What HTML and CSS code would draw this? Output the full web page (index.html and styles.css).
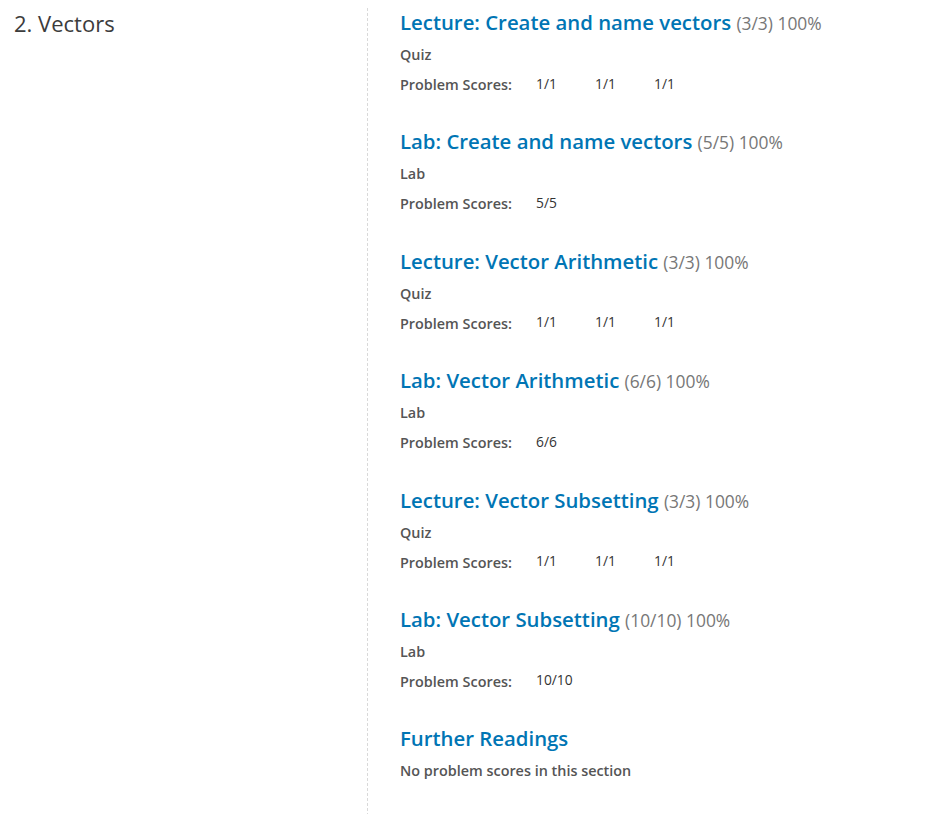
FILE: index.html
```html
<!DOCTYPE html>
<html>
<head>
<meta charset="utf-8">
<link rel="stylesheet" href="styles.css">
</head>
<body>
<div class="chapter">
  <h2 class="chapter-title">2. Vectors</h2>
  <div class="sections">
    <div class="section">
      <h3 class="section-title"><a href="#">Lecture: Create and name vectors</a> <span class="score">(3/3) 100%</span></h3>
      <p class="format">Quiz</p>
      <div class="scores"><span class="label">Problem Scores:</span><ol><li>1/1</li><li>1/1</li><li>1/1</li></ol></div>
    </div>
    <div class="section">
      <h3 class="section-title"><a href="#">Lab: Create and name vectors</a> <span class="score">(5/5) 100%</span></h3>
      <p class="format">Lab</p>
      <div class="scores"><span class="label">Problem Scores:</span><ol><li>5/5</li></ol></div>
    </div>
    <div class="section">
      <h3 class="section-title"><a href="#">Lecture: Vector Arithmetic</a> <span class="score">(3/3) 100%</span></h3>
      <p class="format">Quiz</p>
      <div class="scores"><span class="label">Problem Scores:</span><ol><li>1/1</li><li>1/1</li><li>1/1</li></ol></div>
    </div>
    <div class="section">
      <h3 class="section-title"><a href="#">Lab: Vector Arithmetic</a> <span class="score">(6/6) 100%</span></h3>
      <p class="format">Lab</p>
      <div class="scores"><span class="label">Problem Scores:</span><ol><li>6/6</li></ol></div>
    </div>
    <div class="section">
      <h3 class="section-title"><a href="#">Lecture: Vector Subsetting</a> <span class="score">(3/3) 100%</span></h3>
      <p class="format">Quiz</p>
      <div class="scores"><span class="label">Problem Scores:</span><ol><li>1/1</li><li>1/1</li><li>1/1</li></ol></div>
    </div>
    <div class="section">
      <h3 class="section-title"><a href="#">Lab: Vector Subsetting</a> <span class="score">(10/10) 100%</span></h3>
      <p class="format">Lab</p>
      <div class="scores"><span class="label">Problem Scores:</span><ol><li>10/10</li></ol></div>
    </div>
    <div class="section last">
      <h3 class="section-title"><a href="#">Further Readings</a></h3>
      <p class="none">No problem scores in this section</p>
    </div>
  </div>
</div>
</body>
</html>
```
FILE: styles.css
```css
html, body {
  margin: 0;
  padding: 0;
  background: #fff;
  font-family: "Open Sans", "Liberation Sans", sans-serif;
}
.chapter {
  display: flex;
  padding-top: 8px;
}
.chapter-title {
  width: 353px;
  flex: none;
  margin: 0;
  padding-top: 0;
  padding-left: 14px;
  font-size: 22px;
  line-height: 30px;
  font-weight: 400;
  color: #3c3c3c;
}
.sections {
  border-left: 1px dashed #d9d9d9;
  padding-left: 32px;
  flex: 1;
}
.section {
  padding-top: 2px;
  height: 119.4px;
  box-sizing: border-box;
}
.section-title {
  margin: 0;
  font-size: 20.35px;
  line-height: 24px;
  height: 24px;
  font-weight: 400;
}
.section-title a {
  color: #0075b4;
  font-weight: 600;
  text-decoration: none;
}
.score {
  font-size: 17.4px;
  line-height: 16px;
  color: #777;
}
.format {
  margin: 11px 0 0;
  font-size: 14.4px;
  line-height: 20px;
  font-weight: 600;
  color: #555;
}
.scores {
  display: flex;
  align-items: center;
  margin-top: 10px;
  font-size: 14.4px;
  line-height: 20px;
}
.label {
  font-weight: 600;
  color: #555;
  width: 136px;
  flex: none;
}
.scores ol {
  display: flex;
  list-style: none;
  margin: 0;
  padding: 0;
}
.scores li {
  width: 59px;
  font-size: 13.8px;
  color: #333;
  margin-top: -3px;
}
.none {
  margin: 11px 0 0;
  font-size: 14.4px;
  line-height: 20px;
  font-weight: 600;
  color: #555;
}
.section.last {
  height: auto;
  padding-bottom: 40px;
}
```
